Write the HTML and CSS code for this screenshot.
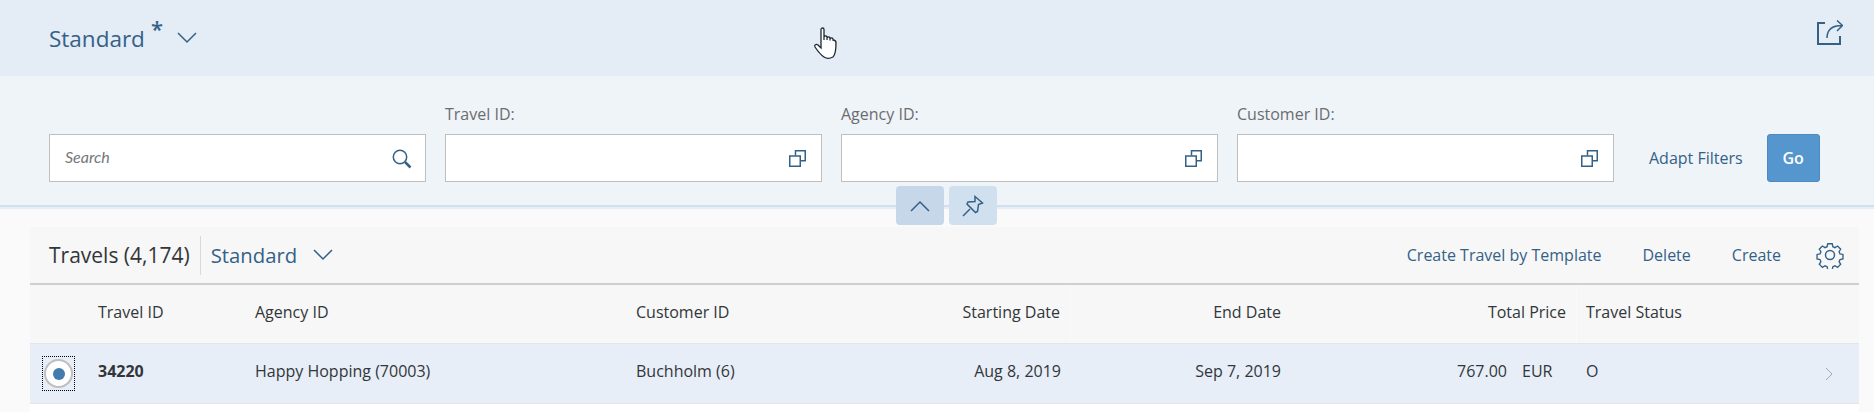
FILE: index.html
```html
<!DOCTYPE html>
<html lang="en">

<head>
    <meta charset="UTF-8">
    <meta name="viewport" content="width=device-width, initial-scale=1.0">
    <title>Travels</title>
    <link rel="stylesheet" href="styles.css">
</head>

<body>
    <header class="page-title">
        <div class="variant">
            <span class="variant-name">Standard</span><span class="variant-star">*</span>
            <svg class="chevron-down" viewBox="0 0 20 12"><path d="M1 1l9 9 9-9"/></svg>
        </div>
        <svg class="share-icon" viewBox="0 0 26 26"><path d="M8 3H1v21h22v-8"/><path class="thin" d="M10 18c0-8 5-12.500 15-12.500M20 .500l5.500 5-5.500 5.500"/></svg>
    </header>

    <section class="filter-bar">
        <div class="field">
            <div class="input">
                <span class="placeholder">Search</span>
                <svg class="search-icon" viewBox="0 0 20 20"><circle cx="8" cy="8" r="6.700"/><path class="thick" d="M13 13l5.500 5.500"/></svg>
            </div>
        </div>
        <div class="field">
            <label>Travel ID:</label>
            <div class="input">
                <svg class="help-icon" viewBox="0 0 17 17"><path d="M6.500 5.500V.750h9.750v10H11.500"/><rect x=".750" y="6" width="10.500" height="10.250"/></svg>
            </div>
        </div>
        <div class="field">
            <label>Agency ID:</label>
            <div class="input">
                <svg class="help-icon" viewBox="0 0 17 17"><path d="M6.500 5.500V.750h9.750v10H11.500"/><rect x=".750" y="6" width="10.500" height="10.250"/></svg>
            </div>
        </div>
        <div class="field">
            <label>Customer ID:</label>
            <div class="input">
                <svg class="help-icon" viewBox="0 0 17 17"><path d="M6.500 5.500V.750h9.750v10H11.500"/><rect x=".750" y="6" width="10.500" height="10.250"/></svg>
            </div>
        </div>
        <a class="adapt">Adapt Filters</a>
        <button class="go">Go</button>
        <div class="collapse-btns">
            <button class="collapse up">
                <svg viewBox="0 0 20 12"><path d="M1 11l9-9 9 9"/></svg>
            </button>
            <button class="collapse">
                <svg viewBox="0 0 22 22"><path d="M1 21l7-7M13 1.500l7.500 6.500-4 1.500-1 7-2 1-8.500-8.500 1-2 7-.500z"/></svg>
            </button>
        </div>
    </section>

    <main class="content">
        <div class="table">
            <div class="toolbar">
                <span class="table-title">Travels (4,174)</span>
                <span class="toolbar-sep"></span>
                <span class="table-variant">Standard</span>
                <svg class="chevron-down" viewBox="0 0 20 12"><path d="M1 1l9 9 9-9"/></svg>
                <span class="spacer"></span>
                <a class="action">Create Travel by Template</a>
                <a class="action">Delete</a>
                <a class="action last">Create</a>
                <svg class="gear-icon" viewBox="0 0 28 28">
                    <path d="M11.500 1.500h5l.7 3.300 2.300 1 2.900-1.800 3.500 3.500-1.800 2.900 1 2.300 3.300.7v5l-3.300.7-1 2.300 1.800 2.900-3.500 3.500-2.900-1.800-2.300 1-.7 3.300h-5l-.7-3.300-2.300-1-2.900 1.800-3.500-3.500 1.800-2.900-1-2.300-3.300-.7v-5l3.300-.7 1-2.300-1.800-2.900 3.500-3.500 2.900 1.800 2.300-1z" transform="translate(1.400 1.400) scale(.9)"/>
                    <circle cx="14" cy="14" r="4.500"/>
                </svg>
            </div>
            <div class="row head">
                <div class="cell"></div>
                <div class="cell">Travel ID</div>
                <div class="cell">Agency ID</div>
                <div class="cell">Customer ID</div>
                <div class="cell right sep">Starting Date</div>
                <div class="cell right">End Date</div>
                <div class="cell right sep">Total Price</div>
                <div class="cell status">Travel Status</div>
                <div class="cell"></div>
            </div>
            <div class="row selected">
                <div class="cell radio-cell">
                    <span class="radio-focus"><span class="radio"><span class="radio-dot"></span></span></span>
                </div>
                <div class="cell"><b>34220</b></div>
                <div class="cell">Happy Hopping (70003)</div>
                <div class="cell">Buchholm (6)</div>
                <div class="cell right">Aug 8, 2019</div>
                <div class="cell right">Sep 7, 2019</div>
                <div class="cell right price"><span>767.00</span><span class="currency">EUR</span></div>
                <div class="cell status">O</div>
                <div class="cell nav">
                    <svg viewBox="0 0 8 14"><path d="M1 1l6 6-6 6"/></svg>
                </div>
            </div>
        </div>
    </main>

    <svg class="hand-cursor" viewBox="0 0 26 34">
        <path d="M8 2.500c0-2 3-2 3 0v10.500-3c0-1.500 3-1.500 3 0v3-2c0-1.500 3-1.500 3 0v2.500-1.500c0-1.500 3-1.500 3 0v1c2 0 3 1 3 3 0 9-1 12-3 14-2 1-6 2-9 0-3-2-7-7-9-10-1-2 1-3.500 3-2l3 3z"/>
    </svg>
</body>

</html>
```

FILE: styles.css
```css
* {
    box-sizing: border-box;
}

html,
body {
    margin: 0;
    height: 100%;
}

body {
    font-family: "Open Sans", "Liberation Sans", sans-serif;
    font-size: 16px;
    color: #32363a;
    background: #fafafa;
    overflow: hidden;
    position: relative;
}

svg {
    fill: none;
    stroke: #346187;
    stroke-width: 1.5;
    flex: none;
}

/* title area */
.page-title {
    height: 76px;
    background: #e4ecf6;
    display: flex;
    align-items: center;
    justify-content: space-between;
    padding: 0 31px 0 49px;
}

.variant {
    display: flex;
    align-items: center;
    color: #346187;
}

.variant-name {
    font-size: 22.500px;
}

.variant-star {
    font-size: 22px;
    font-weight: 600;
    line-height: 1;
    margin: -21px 0 0 6px;
}

.variant .chevron-down {
    margin: 0 0 0 14px;
}

.chevron-down {
    width: 20px;
    height: 12px;
}

.share-icon {
    width: 26px;
    height: 26px;
    margin-bottom: 10px;
    stroke-width: 2;
}

.share-icon .thin {
    stroke-width: 1.500;
}

/* filter bar */
.filter-bar {
    height: 131px;
    background: #eff4f9;
    border-bottom: 2px solid #d1e0ef;
    box-shadow: 0 2px 0 #e5edf6;
    display: flex;
    align-items: flex-end;
    gap: 19px;
    padding: 0 0 23px 49px;
    position: relative;
}

.field {
    width: 377px;
}

.field label {
    display: block;
    color: #6a6d70;
    line-height: 20px;
    margin-bottom: 10px;
}

.input {
    height: 48px;
    background: #fff;
    border: 1px solid #bfbfbf;
    display: flex;
    align-items: center;
    justify-content: flex-end;
    padding: 0 14px 0 15px;
}

.placeholder {
    margin: 0 auto 4px 0;
    font-family: "Lato", sans-serif;
    font-style: italic;
    color: #74777a;
}

.search-icon {
    width: 20px;
    height: 20px;
    margin: 1px -1px 0 0;
}

.search-icon .thick {
    stroke-width: 2.500;
}

.help-icon {
    width: 17px;
    height: 17px;
    margin: 1px 1px 0 0;
}

.adapt {
    color: #346187;
    margin: 0 5px 14px 16px;
    line-height: 20px;
    white-space: nowrap;
}

.go {
    width: 53px;
    height: 48px;
    background: #5496cd;
    border: 1px solid #4b8bc1;
    border-radius: 3px;
    color: #fff;
    font: 600 16px "Open Sans", sans-serif;
}

.collapse-btns {
    position: absolute;
    left: 896px;
    top: 110px;
    display: flex;
    gap: 5px;
}

.collapse {
    width: 48px;
    height: 39px;
    padding: 0;
    border: 0;
    border-radius: 4px;
    background: #d1e0ef;
    display: flex;
    align-items: center;
    justify-content: center;
}

.collapse.up {
    background: #c5d7e9;
}

.collapse svg {
    width: 22px;
    height: 22px;
}

.collapse.up svg {
    width: 20px;
    height: 12px;
}

/* table */
.content {
    height: 205px;
    padding: 20px 15px 0 30px;
}

.table {
    height: 100%;
    background: #fff;
}

.toolbar {
    height: 58px;
    background: #f7f7f7;
    border-bottom: 2px solid #cfcfcf;
    display: flex;
    align-items: center;
    padding: 0 15px 0 19px;
}

.table-title {
    font-size: 21px;
}

.toolbar-sep {
    width: 1px;
    height: 39px;
    background: #d9d9d9;
    margin: 0 10px;
}

.table-variant {
    font-size: 20.300px;
    color: #346187;
    margin-right: 16px;
}

.spacer {
    flex: 1;
}

.action {
    color: #346187;
    margin-right: 41px;
    white-space: nowrap;
}

.action.last {
    margin-right: 35px;
}

.gear-icon {
    width: 28px;
    height: 28px;
}

.row {
    display: grid;
    grid-template-columns: 60px 157px 381px 272px 171px 220px 286px 223px 59px;
    border-bottom: 1px solid #e5e5e5;
}

.cell {
    display: flex;
    align-items: center;
    padding: 0 10px 5px 8px;
    white-space: nowrap;
}

.cell.right {
    justify-content: flex-end;
}

.cell.status {
    padding-left: 9px;
}

.head {
    background: #f7f7f7;
    height: 59px;
}

.head .sep {
    border-right: 1px solid #fafafa;
}

.selected {
    background: #e7eef7;
    height: 60px;
}

.radio-cell {
    padding: 0 0 0 12px;
}

.radio-focus {
    width: 33px;
    height: 35px;
    border: 1px dotted #000;
    display: flex;
    align-items: center;
    justify-content: center;
}

.radio {
    width: 29px;
    height: 29px;
    border-radius: 50%;
    background: #fff;
    border: 2px solid #bfbfbf;
    display: flex;
    align-items: center;
    justify-content: center;
}

.radio-dot {
    width: 12px;
    height: 12px;
    border-radius: 50%;
    background: #427cac;
}

.price {
    padding-right: 0;
}

.currency {
    width: 55px;
    margin-left: 15px;
}

.nav {
    padding-bottom: 0;
}

.nav svg {
    width: 8px;
    height: 14px;
    stroke: #a6a6a6;
    stroke-width: 1;
    margin-left: 17px;
}

.hand-cursor {
    position: absolute;
    left: 813px;
    top: 27px;
    width: 26px;
    height: 34px;
    fill: #fff;
    stroke: #1c2733;
    stroke-width: 1.300;
}
```
